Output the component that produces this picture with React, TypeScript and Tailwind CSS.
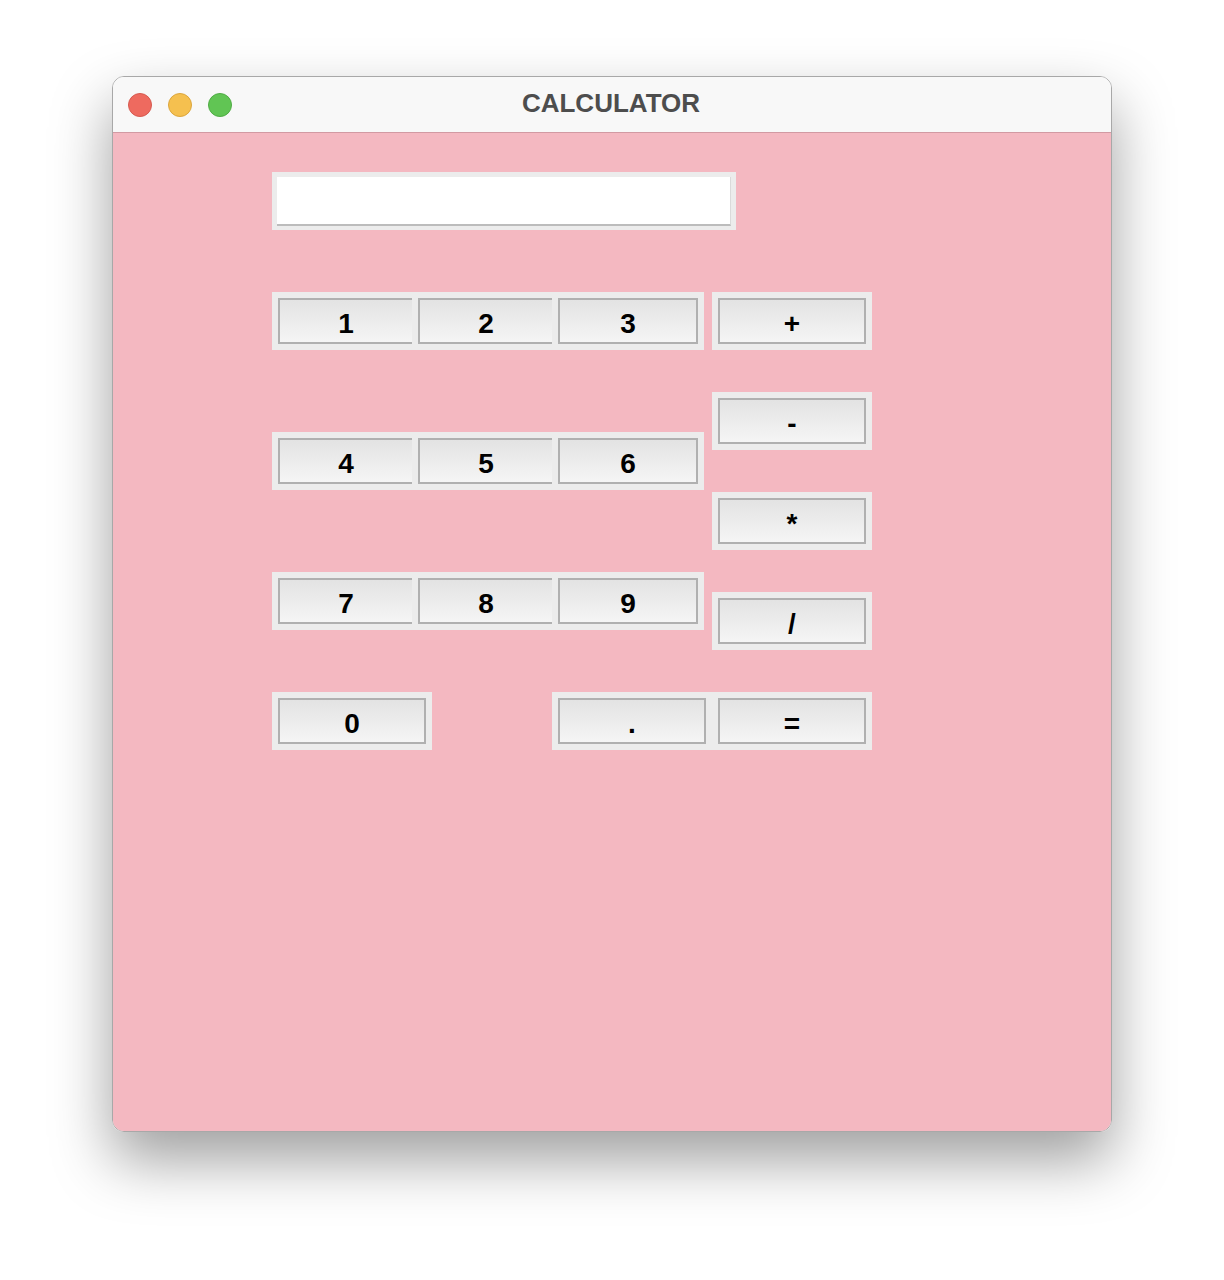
import React from "react";

const font = { fontFamily: '"Liberation Sans", Arial, sans-serif' };

function Btn({ label, w, noRight }: { label: string; w: number; noRight?: boolean }) {
  return (
    <div
      className={
        "h-[46px] flex items-center justify-center border-t-2 border-b-2 border-l-2 border-[#b0b0b0] bg-gradient-to-b from-[#e3e3e3] to-[#f5f5f5] text-[28px] font-bold text-black leading-none pt-[6px] " +
        (noRight ? "border-r-0" : "border-r-2")
      }
      style={{ width: w }}
    >
      {label}
    </div>
  );
}

function Panel({ children, w }: { children: React.ReactNode; w: number }) {
  return (
    <div className="h-[58px] bg-[#ececec] p-[6px] flex gap-[6px]" style={{ width: w }}>
      {children}
    </div>
  );
}

function Row3({ a, b, c }: { a: string; b: string; c: string }) {
  return (
    <Panel w={432}>
      <Btn label={a} w={134} noRight />
      <Btn label={b} w={134} noRight />
      <Btn label={c} w={140} />
    </Panel>
  );
}

function Op({ label }: { label: string }) {
  return (
    <Panel w={160}>
      <Btn label={label} w={148} />
    </Panel>
  );
}

export default function App() {
  return (
    <div className="w-full h-[1280px] bg-white flex justify-center pt-[76px]" style={font}>
      <div className="w-[1000px] h-[1056px] rounded-[12px] border border-[#a8a8a8] overflow-hidden flex flex-col shadow-[0_28px_60px_rgba(0,0,0,0.38)]">
        <div className="h-[56px] shrink-0 bg-[#f8f8f8] border-b border-[#d29aa3] flex items-center relative">
          <div className="flex gap-[16px] pl-[15px]">
            <div className="w-[24px] h-[24px] rounded-full bg-[#ee6a5f] border border-[#d65a50]" />
            <div className="w-[24px] h-[24px] rounded-full bg-[#f5c04f] border border-[#dca63d]" />
            <div className="w-[24px] h-[24px] rounded-full bg-[#61c554] border border-[#50ac45]" />
          </div>
          <div className="absolute inset-0 flex items-center justify-center text-[26px] font-bold text-[#4d4d4d] pr-[2px] pb-[2px]">
            CALCULATOR
          </div>
        </div>
        <div className="flex-1 bg-[#f4b8c1] pl-[159px] pt-[39px]">
          <div className="w-[464px] h-[58px] bg-[#ececec] pt-[5px] pl-[5px] pr-[5px] pb-[4px]">
            <div className="w-full h-full bg-white border-b-2 border-r border-[#bcbcbc] border-r-[#dadada]" />
          </div>
          <div className="mt-[62px] flex gap-[8px]">
            <div className="flex flex-col gap-[82px]">
              <Row3 a="1" b="2" c="3" />
              <Row3 a="4" b="5" c="6" />
              <Row3 a="7" b="8" c="9" />
            </div>
            <div className="flex flex-col gap-[42px]">
              <Op label="+" />
              <Op label="-" />
              <Op label="*" />
              <Op label="/" />
            </div>
          </div>
          <div className="mt-[42px] flex gap-[120px]">
            <Panel w={160}>
              <Btn label="0" w={148} />
            </Panel>
            <div className="h-[58px] w-[320px] bg-[#ececec] p-[6px] flex gap-[12px]">
              <Btn label="." w={148} />
              <Btn label="=" w={148} />
            </div>
          </div>
        </div>
      </div>
    </div>
  );
}
